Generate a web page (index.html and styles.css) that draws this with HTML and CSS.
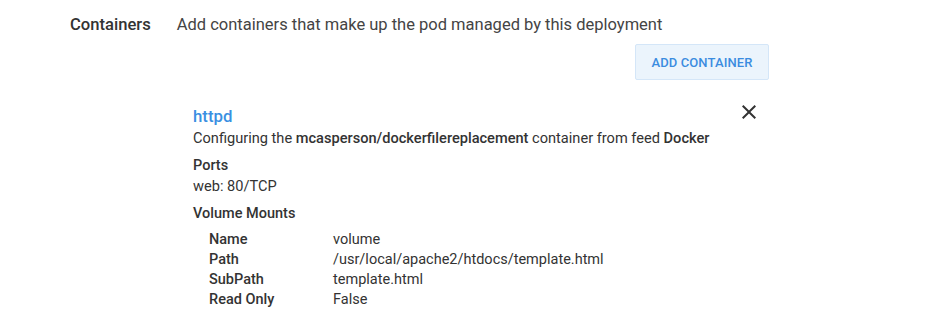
FILE: index.html
```html
<!DOCTYPE html>
<html>
<head>
<meta charset="utf-8">
<link rel="stylesheet" href="styles.css">
</head>
<body>
<div class="section">
  <div class="head">
    <div class="title">Containers</div>
    <div class="desc">Add containers that make up the pod managed by this deployment</div>
  </div>
  <div class="actions">
    <button class="add-btn">ADD CONTAINER</button>
  </div>
  <div class="card">
    <div class="card-head">
      <div class="name">httpd</div>
      <svg class="close" width="24" height="24" viewBox="0 0 24 24"><path d="M19 6.41L17.59 5 12 10.59 6.41 5 5 6.41 10.59 12 5 17.59 6.41 19 12 13.41 17.59 19 19 17.59 13.41 12z" fill="#333"/></svg>
    </div>
    <div class="line">Configuring the <b>mcasperson/dockerfilereplacement</b> container from feed <b>Docker</b></div>
    <div class="sub">Ports</div>
    <div class="line">web: 80/TCP</div>
    <div class="sub vm">Volume Mounts</div>
    <div class="table">
      <div class="k">Name</div><div class="v">volume</div>
      <div class="k">Path</div><div class="v">/usr/local/apache2/htdocs/template.html</div>
      <div class="k">SubPath</div><div class="v">template.html</div>
      <div class="k">Read Only</div><div class="v">False</div>
    </div>
  </div>
</div>
</body>
</html>
```
FILE: styles.css
```css
html, body {
  margin: 0;
  padding: 0;
  background: #fff;
  font-family: Roboto, "Liberation Sans", sans-serif;
  color: #333;
}
.section {
  padding: 15px 0 0 70px;
  width: 700px;
}
.head {
  display: flex;
  align-items: baseline;
  gap: 26px;
}
.title {
  font-size: 16.6px;
  font-weight: 500;
  color: #333;
}
.desc {
  font-size: 16.5px;
  color: #444;
}
.actions {
  display: flex;
  justify-content: flex-end;
  padding-top: 10px;
  width: 699px;
}
.add-btn {
  font-family: Roboto, "Liberation Sans", sans-serif;
  font-size: 13px;
  font-weight: 500;
  color: #3b8ce0;
  background: #ebf4fc;
  border: 1px solid #d4e6f8;
  border-radius: 2px;
  width: 134px;
  height: 36px;
  padding: 0;
  letter-spacing: 0.1px;
}
.card {
  margin-left: 123px;
  width: 570px;
  padding-top: 24px;
}
.card-head {
  display: flex;
  justify-content: space-between;
  align-items: center;
  height: 24px;
}
.name {
  font-size: 16.8px;
  font-weight: 500;
  color: #3a8fe2;
}
.close {
  margin-right: 2px;
  margin-top: -8px;
}
.line {
  font-size: 14.6px;
  line-height: 20px;
  color: #333;
}
.line b { font-weight: 500; }
.sub {
  font-size: 14.5px;
  font-weight: 500;
  line-height: 20px;
  margin-top: 8px;
}
.vm { margin-top: 8px; }
.table {
  display: grid;
  grid-template-columns: 124px auto;
  padding-left: 16px;
  margin-top: 6px;
  font-size: 14.5px;
  line-height: 20px;
}
.k { font-weight: 500; }
```
